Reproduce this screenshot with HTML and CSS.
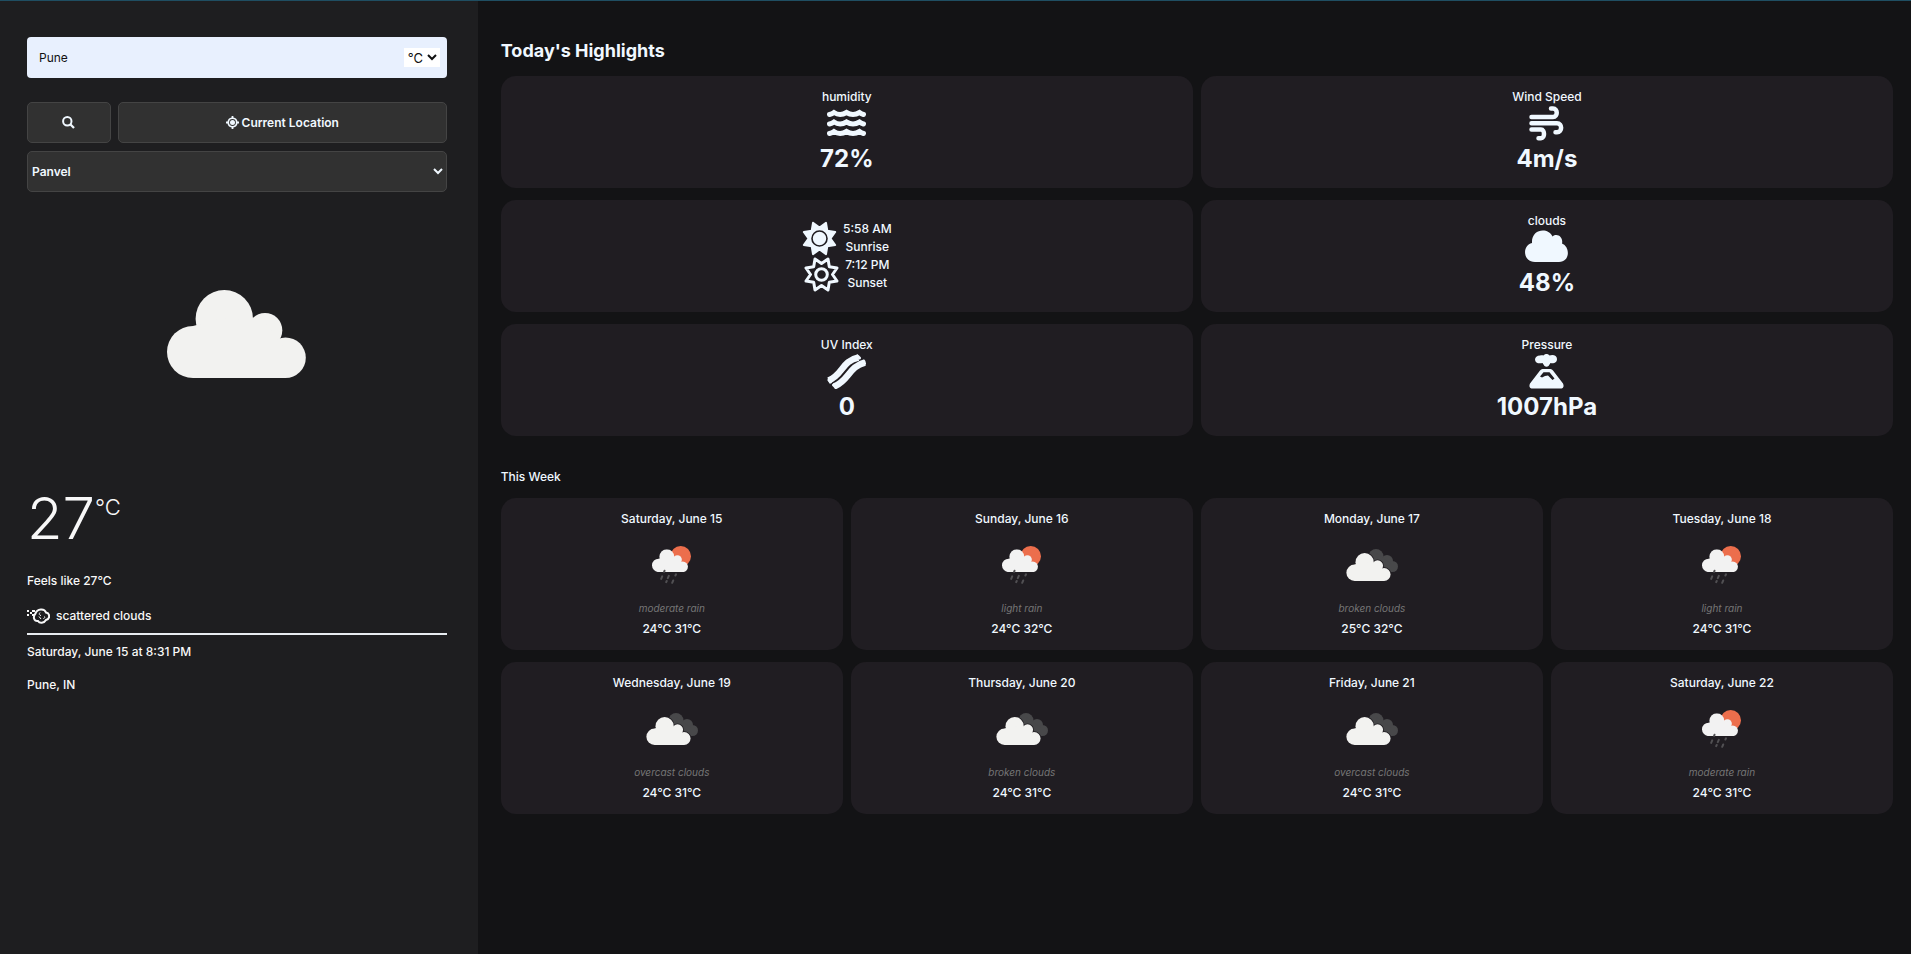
FILE: index.html
```html
<!DOCTYPE html>
<html lang="en">
<head>
<meta charset="utf-8">
<title>Weather</title>
<link rel="stylesheet" href="styles.css">
</head>
<body>
<svg class="defs" aria-hidden="true">
  <symbol id="cloud" viewBox="0 0 139 88">
    <circle cx="26" cy="62" r="26"/><circle cx="57.300" cy="28.700" r="28.700"/><circle cx="98" cy="40.300" r="17.300"/><circle cx="118.500" cy="67.700" r="20.300"/><path d="M26 88V36L57 28L98 32L118.500 60V88Z"/>
  </symbol>
  <symbol id="broken" viewBox="0 0 52 32">
    <g fill="#48484a"><circle cx="30" cy="7.500" r="7.500"/><circle cx="41" cy="12" r="6"/><circle cx="46.500" cy="17.500" r="5.500"/><path d="M30 4L46 15L46 23L34 23Z"/></g>
    <use href="#cloud" x="0" y="4" width="45" height="28" fill="#201d22" stroke="#201d22" stroke-width="5"/>
    <use href="#cloud" x="0" y="4" width="45" height="28" fill="#f2f2f0"/>
  </symbol>
  <symbol id="rain" viewBox="0 0 39 38">
    <circle cx="28.700" cy="10.300" r="10.300" fill="#ec6e4c"/>
    <use href="#cloud" x="0" y="3.300" width="36" height="22.800" fill="#f2f2f2"/>
    <path stroke="#515053" stroke-width="2" stroke-linecap="round" d="M12.500 24.800l-.4 1M10.200 30.400l-1 2.500M16.800 29.800l-1 2.300M24 28.300l-.6 1.200M14.700 35l-.5 1.200M21.200 34.500l-1 2.300"/>
  </symbol>
</svg>

<div class="app">
  <aside class="sidebar">
    <form class="search">
      <div class="field">
        <input class="city" type="text" value="Pune" aria-label="City">
        <select class="unit" aria-label="Unit"><option>°C</option><option>°F</option></select>
      </div>
      <div class="actions">
        <button class="btn btn-search" type="button" aria-label="Search">
          <svg width="13" height="13" viewBox="0 0 13 13" fill="none" stroke="currentColor" stroke-width="2"><circle cx="5.300" cy="5.300" r="4.200"/><path d="M8.300 8.300l3.700 3.700" stroke-width="2.300"/></svg>
        </button>
        <button class="btn btn-location" type="button">
          <svg width="13" height="13" viewBox="0 0 13 13"><path fill="currentColor" fill-rule="evenodd" d="M5.600 0h1.800v1.500a5 5 0 0 1 4.100 4.100H13v1.800h-1.500a5 5 0 0 1-4.100 4.100V13H5.600v-1.500a5 5 0 0 1-4.100-4.100H0V5.600h1.500a5 5 0 0 1 4.100-4.100zM6.500 3.100a3.400 3.400 0 1 0 0 6.800a3.400 3.400 0 0 0 0-6.800z"/><circle cx="6.500" cy="6.500" r="2.500" fill="currentColor"/></svg>
          <span>Current Location</span>
        </button>
      </div>
      <select class="btn place" aria-label="Saved city"><option>Panvel</option><option>Pune</option></select>
    </form>

    <div class="hero"><svg class="hero-cloud" role="img" aria-label="Cloudy"><use href="#cloud"/></svg></div>

    <div class="temp"><span class="degrees">27</span><span class="degrees-unit">°C</span></div>
    <p class="feels">Feels like 27°C</p>
    <p class="condition">
      <svg width="23" height="16" viewBox="0 0 23 16" fill="none" stroke="currentColor"><path stroke-width="2" d="M8.500 5.500C10 .5 17.500 0 19 4.500C23 5 23.500 11 19 12C17 15.500 12.500 15.500 11 13C7 13.500 5.500 9 8.500 5.500z"/><path stroke-width="1" d="M13 4.500c-1.500 1.500-.5 3 1 3M14 11l-2-2.500M16.500 10.500c1 0 1.500-1 1-2"/><path stroke-width="2" d="M0 3h2M0 7h2M3 5h2M5 3h3M5 7h2"/></svg>
      <span>scattered clouds</span>
    </p>
    <p class="date">Saturday, June 15 at 8:31 PM</p>
    <p class="town">Pune, IN</p>
  </aside>

  <main class="main">
    <h1 class="title">Today's Highlights</h1>
    <section class="highlights">
      <article class="card tile">
        <h2 class="label">humidity</h2>
        <svg class="icon" width="39" height="35" viewBox="0 0 39 35" fill="none" stroke="currentColor" stroke-width="5" stroke-linecap="round"><path d="M2.500 8.500q2.500-.5 4.500-2q6 4 12.500 0q6.500 4 13 0q2 1.500 4 2M2.500 18q2.500-.5 4.500-2q6 4 12.500 0q6.500 4 13 0q2 1.500 4 2M2.500 27.500q2.500-.5 4.500-2q6 4 12.500 0q6.500 4 13 0q2 1.500 4 2"/></svg>
        <p class="value">72%</p>
      </article>
      <article class="card tile">
        <h2 class="label">Wind Speed</h2>
        <svg class="icon" width="35" height="35" viewBox="0 0 35 35" fill="none" stroke="currentColor" stroke-width="4.500" stroke-linecap="round"><path d="M2.500 11H24c5 0 5-8.500 0-8.500h-2M2.500 17.200H28c5.500 0 5.500 9 0 9h-1.500M2.500 23.500H12c4 0 4 8.800 0 8.800h-2.500"/></svg>
        <p class="value">4m/s</p>
      </article>
      <article class="card tile">
        <div class="sun-row">
          <svg width="35" height="35" viewBox="0 0 35 35"><path fill="currentColor" stroke="currentColor" stroke-width="2" stroke-linejoin="round" d="M33.200 24L25.300 25.300L24 33.200L17.500 28.500L11 33.200L9.700 25.300L1.800 24L6.500 17.500L1.800 11L9.700 9.700L11 1.800L17.500 6.500L24 1.800L25.300 9.700L33.200 11L28.500 17.500Z"/><circle cx="17.500" cy="17.500" r="7.500" fill="none" stroke="#201d22" stroke-width="1.600"/></svg>
          <p class="sun-text">5:58 AM<br>Sunrise</p>
        </div>
        <div class="sun-row">
          <svg width="35" height="35" viewBox="0 0 35 35" fill="none" stroke="currentColor" stroke-width="3" stroke-linejoin="round"><path d="M33 24L25.300 25.300L24 33L17.500 28.500L11 33L9.700 25.300L2 24L6.500 17.500L2 11L9.700 9.700L11 2L17.500 6.500L24 2L25.300 9.700L33 11L28.500 17.500Z"/><circle cx="17.500" cy="17.500" r="5.800"/></svg>
          <p class="sun-text">7:12 PM<br>Sunset</p>
        </div>
      </article>
      <article class="card tile">
        <h2 class="label">clouds</h2>
        <svg class="icon" width="43" height="35" viewBox="0 0 43 35" fill="currentColor"><path d="M10 32C-3 31.500-2.500 15 7 13C6-.5 22.500-3.500 27.500 6.500C32.500 2.500 38.500 7.500 37 13.500C45.500 17 45 32 34 32Z"/></svg>
        <p class="value">48%</p>
      </article>
      <article class="card tile">
        <h2 class="label">UV Index</h2>
        <svg class="icon" width="39" height="35" viewBox="0 0 39 35" fill="none" stroke="currentColor" stroke-width="6.500"><path stroke-linecap="butt" d="M1.500 26.500C16 21 14.500 7 31.500 3.500M7 32.500C22 27 21.500 12.500 38 8.500"/><path stroke-width="3" stroke-linecap="round" stroke-linejoin="round" d="M2 26l1.500 2M30.500 2l2 2M6.500 31l2 2M37 7.500l.5 2"/></svg>
        <p class="value">0</p>
      </article>
      <article class="card tile">
        <h2 class="label">Pressure</h2>
        <svg class="icon" width="35" height="35" viewBox="0 0 35 35"><path fill="currentColor" d="M11 1.500C12.500 1 13.500 1 14.500 1.500C16-.5 19-.5 20.500 1.500C24 0 28 1.500 28 5C28 9 24 10 21.500 9L19.500 12Q17.500 13.500 15.500 12L13.500 9C10 10 6 9 6 5.500C6 3.500 8 1.500 11 1.500zM13.500 15H21.500Q23 15 24 16.500L34 29.500Q36 34.500 31 34.500H4Q-1 34.500 1 29.500L11 16.500Q12 15 13.500 15z"/><path fill="#201d22" d="M14.500 18.200H20.500L25.500 24.500L23.500 26L19 21.500Q16 21.500 13 23.500L11 22.500z"/></svg>
        <p class="value">1007hPa</p>
      </article>
    </section>

    <h2 class="subtitle">This Week</h2>
    <section class="week">
      <article class="card day"><h3 class="label">Saturday, June 15</h3><div class="art"><svg class="art-rain"><use href="#rain"/></svg></div><p class="desc">moderate rain</p><p class="range">24°C 31°C</p></article>
      <article class="card day"><h3 class="label">Sunday, June 16</h3><div class="art"><svg class="art-rain"><use href="#rain"/></svg></div><p class="desc">light rain</p><p class="range">24°C 32°C</p></article>
      <article class="card day"><h3 class="label">Monday, June 17</h3><div class="art"><svg class="art-broken"><use href="#broken"/></svg></div><p class="desc">broken clouds</p><p class="range">25°C 32°C</p></article>
      <article class="card day"><h3 class="label">Tuesday, June 18</h3><div class="art"><svg class="art-rain"><use href="#rain"/></svg></div><p class="desc">light rain</p><p class="range">24°C 31°C</p></article>
      <article class="card day"><h3 class="label">Wednesday, June 19</h3><div class="art"><svg class="art-broken"><use href="#broken"/></svg></div><p class="desc">overcast clouds</p><p class="range">24°C 31°C</p></article>
      <article class="card day"><h3 class="label">Thursday, June 20</h3><div class="art"><svg class="art-broken"><use href="#broken"/></svg></div><p class="desc">broken clouds</p><p class="range">24°C 31°C</p></article>
      <article class="card day"><h3 class="label">Friday, June 21</h3><div class="art"><svg class="art-broken"><use href="#broken"/></svg></div><p class="desc">overcast clouds</p><p class="range">24°C 31°C</p></article>
      <article class="card day"><h3 class="label">Saturday, June 22</h3><div class="art"><svg class="art-rain"><use href="#rain"/></svg></div><p class="desc">moderate rain</p><p class="range">24°C 31°C</p></article>
    </section>
  </main>
</div>
</body>
</html>
```

FILE: styles.css
```css
* {
  box-sizing: border-box;
  margin: 0;
  padding: 0;
}

body {
  background: #131315;
  color: aliceblue;
  font-family: Inter, "Open Sans", sans-serif;
  font-size: 12px;
  font-weight: 500;
  line-height: 18px;
}

.defs {
  position: absolute;
  width: 0;
  height: 0;
}

svg {
  display: block;
  flex: none;
}

.app {
  display: grid;
  grid-template-columns: 1fr 3fr;
  min-height: 100vh;
  border-top: 1px solid #1f4e62;
}

.sidebar {
  padding: 36px 31px 24px 27px;
  background: #1e1e20;
  color: #f8f8f8;
}

.field {
  display: flex;
  align-items: center;
  height: 41px;
  padding: 0 7px 0 12px;
  border-radius: 4px;
  background: #e8f0fe;
}

.city {
  flex: 1;
  min-width: 0;
  border: 0;
  outline: 0;
  background: transparent;
  color: #111;
  font: 400 12px/18px Inter, sans-serif;
}

.unit {
  height: 19px;
  border: 0;
  background: #fff;
  color: #111;
  font: 400 13px/19px Inter, sans-serif;
}

.actions {
  display: flex;
  gap: 7px;
  margin: 24px 0 8px;
}

.btn {
  display: flex;
  align-items: center;
  justify-content: center;
  gap: 3px;
  height: 41px;
  border: 1px solid #444;
  border-radius: 5px;
  background: #313131;
  color: aliceblue;
  font: 600 12px/18px Inter, sans-serif;
}

.btn-search {
  flex: 1;
}

.btn-location {
  flex: 4;
}

.place {
  width: 100%;
}

.hero {
  display: flex;
  align-items: center;
  justify-content: center;
  height: 284px;
}

.hero-cloud {
  width: 139px;
  height: 88px;
  fill: #f2f2f0;
}

.temp {
  display: flex;
  align-items: flex-start;
  height: 96px;
}

.degrees {
  font-size: 58px;
  font-weight: 300;
  line-height: 84px;
}

.degrees-unit {
  font-size: 22px;
  font-weight: 300;
  line-height: 62px;
}

.condition {
  display: flex;
  align-items: center;
  gap: 6px;
  margin-top: 16px;
  padding: 1px 0 8px;
  border-bottom: 2px solid #e8ecf0;
}

.date {
  margin-top: 8px;
}

.town {
  margin-top: 15px;
}

.main {
  padding: 36px 18px 24px 23px;
}

.title {
  font-size: 18px;
  font-weight: 700;
  line-height: 27px;
}

.highlights {
  display: grid;
  grid-template-columns: repeat(2, 1fr);
  gap: 12px 8px;
  margin-top: 12px;
}

.card {
  display: flex;
  flex-direction: column;
  align-items: center;
  padding: 12px;
  border-radius: 15px;
  background: #201d22;
  text-align: center;
}

.tile {
  justify-content: center;
  padding: 11px;
  min-height: 112px;
}

.label {
  font-size: 12px;
  font-weight: 500;
}

.value {
  font-size: 24px;
  font-weight: 700;
  line-height: 36px;
}

.sun-row {
  display: flex;
  align-items: center;
  gap: 6px;
}

.subtitle {
  margin: 32px 0 12px;
  font-size: 12px;
  font-weight: 500;
}

.week {
  display: grid;
  grid-template-columns: repeat(4, 1fr);
  gap: 12px 8px;
}

.art {
  display: flex;
  align-items: center;
  height: 73px;
}

.art-rain {
  width: 39px;
  height: 38px;
}

.art-broken {
  width: 52px;
  height: 32px;
}

.desc {
  margin-bottom: 4px;
  color: #767676;
  font-size: 10px;
  font-style: italic;
  font-weight: 400;
  line-height: 15px;
}
```
